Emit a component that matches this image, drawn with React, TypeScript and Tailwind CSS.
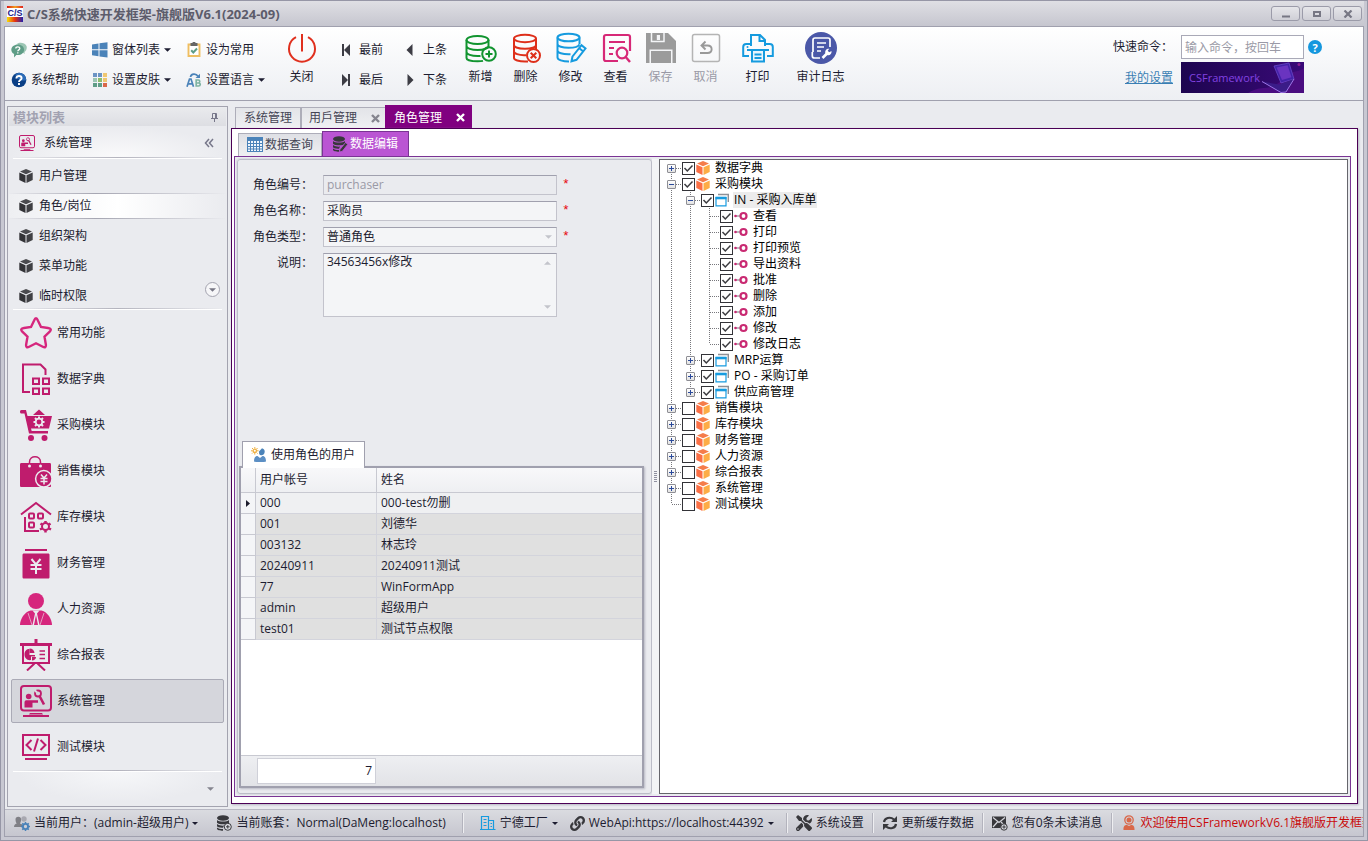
import React from 'react'
import { FaLink, FaTools } from 'react-icons/fa'

type Children = { children?: React.ReactNode }
type IconProps = { className?: string }

const PINK = '#bf1c6d'

function Caret({ className = 'h-[4px] w-[7px]' }: IconProps) {
  return (
    <svg className={className} viewBox="0 0 8 4" fill="currentColor" aria-hidden>
      <path d="M0 0h8L4 4z" />
    </svg>
  )
}

/* ---------- small toolbar icons ---------- */

const AboutIcon = () => (
  <svg className="size-4" viewBox="0 0 16 16" aria-hidden>
    <path d="M6 1.800C8-.2 14 .3 15.500 4c.8 2.600-.4 4.800-2 6l.2 2-1.700-1.200z" fill="#9cc6b4" />
    <path d="M6.800 2.500c3.600 0 6.300 2.300 6.300 5.300s-2.700 5.300-6.300 5.300c-.5 0-1 0-1.500-.1L3 15.500l.1-3.400C1.300 11.200.3 9.600.3 7.800c0-3 3-5.300 6.500-5.300z" fill="#5f9d87" />
    <path d="M4.800 6.600c0-2.300 4-2.300 4-.1 0 1.400-2 1.300-2 2.800M6.800 10.300v1.300" stroke="#fff" strokeWidth="1.300" fill="none" />
  </svg>
)
const HelpIcon = () => (
  <svg className="size-4" viewBox="0 0 16 16" aria-hidden>
    <circle cx="8" cy="8" r="7.300" fill="#0a3f86" />
    <path d="M8 .7A7.300 7.300 0 0 1 15.300 8c-4 1.500-9 0-11-5.200A7.300 7.300 0 0 1 8 .7z" fill="#2c6cb8" />
    <path d="M5.400 6.400c0-3.200 5.200-3.100 5.200-.1C10.600 8 8 8 8 9.900M8 11v1.900" stroke="#fff" strokeWidth="1.900" fill="none" />
  </svg>
)
const WindowsIcon = () => (
  <svg className="size-4" viewBox="0 0 16 16" fill="#4b83b9" aria-hidden>
    <path d="M0 2.400 6.500 1.500V7.300H0zM7.500 1.300 15.500.2V7.300h-8zM0 8.300h6.500v5.900L0 13.300zM7.500 8.300h8v7.200l-8-1.100z" />
  </svg>
)
const SkinIcon = () => {
  const c = ['#6c94c4', '#6c94c4', '#efc772', '#9cc6b4', '#8dbd6a', '#efc772', '#5f9d87', '#5f9d87', '#d9684a']
  return (
    <svg className="size-4" viewBox="0 0 16 16" aria-hidden>
      {c.map((f, i) => (
        <rect key={i} x={1 + (i % 3) * 5} y={1 + Math.floor(i / 3) * 5} width="4" height="4" fill={f} />
      ))}
    </svg>
  )
}
const ClipboardIcon = () => (
  <svg className="size-4" viewBox="0 0 16 16" aria-hidden>
    <path d="M2.500 2.500h11v11.500h-11z" fill="#fff" stroke="#efbe61" strokeWidth="1.900" />
    <path d="M4.500 1H6.500a1.500 1.500 0 0 1 3 0H11.500v3h-7z" fill="#666" />
    <path d="M5.200 8.300 7.300 10.500l3.700-4" stroke="#5f9d87" strokeWidth="2" fill="none" />
  </svg>
)
const LanguageIcon = () => (
  <svg className="size-4" viewBox="0 0 16 16" aria-hidden>
    <path d="M1 14.700 3.500 7h1.500l2.500 7.700M2.200 11.800h4" stroke="#4b83b9" strokeWidth="1.700" fill="none" />
    <path d="M10.200 8v6h2.300c2.300 0 2.300-3 .2-3h-2.500 2.200c1.800 0 1.800-3 0-3z" stroke="#7eb3a2" strokeWidth="1.700" fill="none" />
    <path d="M4.500 5C5 1.500 10 1 12 4.200" stroke="#4b83b9" strokeWidth="1.700" fill="none" />
    <path d="M14 1.800V6H9.500z" fill="#4b83b9" />
  </svg>
)
const NavIcon = ({ flip, bar }: { flip?: boolean; bar?: boolean }) => (
  <svg className={flip ? 'h-3 w-2 -scale-x-100' : 'h-3 w-2'} viewBox="0 0 8 12" fill="#3c3c44" aria-hidden>
    {bar && <rect x="0" y="0" width="2" height="12" />}
    <path d={bar ? 'M8 0v12L2 6z' : 'M6.500 0v12L.5 6z'} />
  </svg>
)

/* ---------- large toolbar icons ---------- */

const Big = ({ children }: Children) => (
  <svg className="size-8" viewBox="0 0 32 32" fill="none" strokeWidth="2" aria-hidden>
    {children}
  </svg>
)
const PowerIcon = () => (
  <Big>
    <path d="M10 5.200a13 13 0 1 0 12 0" stroke="#e0301e" />
    <path d="M16 2v17.500" stroke="#e0301e" />
  </Big>
)
const AddIcon = () => (
  <Big>
    <g stroke="#11942f">
      <ellipse cx="12.500" cy="8" rx="11" ry="4" />
      <path d="M1.500 8v18c0 2 5 3.300 11 3.300 2 0 4 0 5.500-.4M23.500 8v8M1.500 14c0 2.200 5 4 11 4s10.500-1.600 11-3.700M1.500 20c0 2.200 5 4 11 4 1 0 2 0 3-.1" />
      <circle cx="24" cy="22" r="6.800" />
      <path d="M24 18.500v7M20.500 22h7" />
    </g>
  </Big>
)
const DeleteIcon = () => (
  <Big>
    <g stroke="#de2f1a">
      <ellipse cx="15" cy="6.500" rx="11" ry="3.700" />
      <path d="M4 6.500V26c0 2 5 3.500 11 3.500h3M26 6.500V18M4 13c0 2.200 5 3.700 11 3.700s11-1.500 11-3.700M4 19.500c0 2.200 5 3.700 10 3.700h2" />
      <circle cx="23.500" cy="23.500" r="6.500" />
      <path d="m20.700 20.700 5.600 5.600M26.300 20.700l-5.600 5.600" />
    </g>
  </Big>
)
const EditIcon = () => (
  <Big>
    <g stroke="#169bdf">
      <ellipse cx="13.500" cy="5.500" rx="11" ry="3.800" />
      <path d="M2.500 5.500V25.500c0 2.200 5 4 11.500 4M24.500 5.500V12M2.500 12c0 2.200 5 3.800 11 3.800 5 0 10-1 11-3.500M2.500 18.500c0 2.200 5 3.800 11 3.800h2" />
      <path d="m17.500 24.500 9-11.300 4 3.300L21.500 27.800l-5 1.500zM24 16l4 3.300" />
    </g>
  </Big>
)
const ViewIcon = () => (
  <Big>
    <g stroke="#d72877">
      <path d="M30 19V5c0-1.300-.6-2-2-2H6c-1.400 0-2 .7-2 2v22c0 1.300.6 2 2 2h12" strokeWidth="2.200" />
      <path d="M9 10h16M9 16h5M9 22h4" />
      <circle cx="22" cy="21" r="5.300" strokeWidth="2.200" />
      <path d="m25.700 25 4.300 5" strokeWidth="2.400" />
    </g>
  </Big>
)
const SaveIcon = () => (
  <Big>
    <path d="M1 1h22l8 8v22H1z" fill="#9b9b9b" />
    <path d="M6.500 1v8.500h12.500V1" stroke="#f4f5f7" strokeWidth="1.500" />
    <path d="M11.800 3h3.200v5h-3.200z" fill="#f4f5f7" />
    <path d="M4.500 17.500h23V31h-23z" fill="#f4f5f7" />
    <path d="M6 19h20v12H6z" fill="#9b9b9b" />
  </Big>
)
const UndoIcon = () => (
  <Big>
    <rect x="2.500" y="2.500" width="27" height="27" rx="2" stroke="#b4b4b4" strokeWidth="1.500" />
    <path d="M12 13.500h5.500c5.500 0 5.500 7.500 0 7.500H10M15.500 9.500l-4 4 4 4" stroke="#999" strokeWidth="1.900" />
  </Big>
)
const PrintIcon = () => (
  <Big>
    <g stroke="#169bdf">
      <path d="M9 14V3h9l5 5v6M17.500 3v6H23" />
      <path d="M7 24H1.200V15c0-2 .8-3 3-3H9M25 24h5.800V15c0-2-.8-3-3-3H23" />
      <path d="M5 18h22" />
      <path d="M10 18h12v11.500H10z" fill="#e8f5fd" />
      <path d="M12.500 22.500h7M12.500 26h7" />
    </g>
    <circle cx="5.500" cy="15" r="1" fill="#169bdf" />
  </Big>
)
const AuditIcon = () => (
  <Big>
    <circle cx="16" cy="16" r="16" fill="#4b58a8" />
    <g stroke="#fff">
      <path d="M15 26H9.500C8 26 7.300 25 7.300 24v-4M8 20V8c0-1.300.6-2 2-2h13c1.400 0 2 .7 2 2v7" strokeWidth="1.700" />
      <path d="M12 11h9M12 15h7M12 19h4" strokeWidth="1.700" />
      <path d="m17.500 26 5-5" strokeWidth="2.600" />
    </g>
    <path d="M20.500 21.500c-1-3 1-5.300 3.800-4.800l-1.600 2.100 1.500 1.500 2.300-1.400c.5 3-1.800 4.900-4.300 4.100z" fill="#fff" />
  </Big>
)

/* ---------- navigation icons ---------- */

const Mod = ({ children, small }: Children & { small?: boolean }) => (
  <svg className={small ? 'size-4' : 'size-8'} viewBox="0 0 32 32" fill="none" stroke={PINK} strokeWidth="2" aria-hidden>
    {children}
  </svg>
)
const StarIcon = () => (
  <Mod>
    <path d="M16 1.200c.8 0 1.300.8 2 2.500l3 6.300 7 1c3 .4 3.500 1.700 1.700 3.700l-5.200 5 1.300 7.500c.5 2.900-.7 3.700-3 2.500L16 26.300l-6.800 3.400c-2.300 1.200-3.500.4-3-2.500l1.300-7.500-5.200-5C.500 12.700 1 11.400 4 11l7-1 3-6.300c.7-1.700 1.200-2.500 2-2.500z" stroke="#d6267d" strokeWidth="2.400" />
  </Mod>
)
const DictIcon = () => (
  <Mod>
    <path d="M10 29H3V1.500h17.500l5 5V12" />
    <path d="M13 15.500h6v5.500h-6zM23 15.500h6v5.500h-6zM13 25.500h6V31h-6zM23 25.500h6V31h-6z" />
  </Mod>
)
const CartIcon = () => (
  <Mod>
    <g fill={PINK} stroke="none">
      <path d="M0 2.500C0 1 1 1 2.500 1H6l1.500 6H32l-3 12.500H11l.7 2.500H28v2.500H9L4.500 4.500H1.500C.5 4.500 0 4 0 2.500zM13 6l6-5.500L25 6z" />
      <circle cx="11" cy="29" r="3" />
      <circle cx="24.500" cy="29" r="3" />
    </g>
    <circle cx="19" cy="13" r="3.300" stroke="#eaebef" strokeWidth="1.700" />
    <path d="M19 7.500v2M19 16.500v2M13.500 13h2M22.500 13h2M15 9l1.500 1.500M23 9l-1.500 1.500M15 17l1.500-1.500M23 17l-1.500-1.500" stroke="#eaebef" />
  </Mod>
)
const BagIcon = () => (
  <Mod>
    <path d="M1.500 8h28c1 0 1.500.5 1.500 1.500v21.500c0 .6-.5 1-1 1H1.500C.5 32 0 31.500 0 31V9.500C0 8.500.5 8 1.500 8z" fill={PINK} stroke="none" />
    <path d="M9.500 8V7c0-7 11-7 11 0v1" strokeWidth="1.500" />
    <circle cx="9.500" cy="11" r="1.500" fill="#eaebef" stroke="none" />
    <circle cx="20.500" cy="11" r="1.500" fill="#eaebef" stroke="none" />
    <circle cx="23.800" cy="23.800" r="8.200" fill={PINK} stroke="#eaebef" strokeWidth="1.500" />
    <path d="m21 19.500 3 3.500 3-3.500M24 23v6.500M20.500 23.500h7M20.500 26.500h7" stroke="#eaebef" strokeWidth="1.500" />
  </Mod>
)
const HouseIcon = () => (
  <Mod>
    <path d="M1 13.500 16 2l15 11.500M5 16v14h14" />
    <rect x="9" y="12.500" width="5" height="5" rx="1" />
    <rect x="18" y="12.500" width="5" height="5" rx="1" />
    <rect x="9" y="21.500" width="5" height="5" rx="1" />
    <circle cx="25.500" cy="25.500" r="3.500" />
    <path d="M25.500 20v1.500M25.500 29.500V31.500M20.500 22.500l1.500 1M29 27.500l2 1M30.500 22.500l-1.500 1M22 27.500l-2 1" strokeWidth="2.500" />
  </Mod>
)
const FinanceIcon = () => (
  <Mod>
    <path d="M5 3h22" />
    <path d="M4 6.500h24c1 0 1.500.5 1.500 1.500v22c0 1-.5 1.500-1.500 1.500H4c-1 0-1.500-.5-1.500-1.500V8c0-1 .5-1.500 1.500-1.500z" fill={PINK} stroke="none" />
    <path d="m11.500 12 4.500 5.500L20.500 12M16 17.500V27M10.500 18h11M10.500 22h11" stroke="#eaebef" />
  </Mod>
)
const PersonIcon = () => (
  <Mod>
    <g fill="#d6267d" stroke="none">
      <circle cx="16" cy="8" r="8" />
      <path d="M0 32c0-6 4.500-13 10.500-14.500h11C27.500 19 32 26 32 32z" />
    </g>
    <path d="m12.500 17.500 2.500 3-2.500 11.500h7L17 20.500l2.500-3z" fill="#eaebef" stroke="none" />
    <path d="m16 22-2 10h4z" fill="#d6267d" stroke="none" />
    <path d="m8 20 4 12M24 20l-4 12" stroke="#eaebef" strokeWidth=".6" />
  </Mod>
)
const ReportIcon = () => (
  <Mod>
    <path d="M0 5.500h32" strokeWidth="3" />
    <path d="M16 0v5" strokeWidth="3" />
    <path d="M3 6v18h26V6M14.500 24.500 7 31.500M17.500 24.500 25 31.500" />
    <path d="M19.500 12h5.500M19.500 15.500h5.500M19.500 19.500h5.500" strokeWidth="1.600" />
    <path d="M9.500 10v6h5.500v1.500h-4V21c-3.500.8-6.500-2-6.500-5.500S6.500 10 9.500 10z" fill={PINK} stroke="none" />
    <path d="M12 18h4c0 2-1.800 3.500-4 3.500z" fill={PINK} stroke="none" />
    <path d="M9.500 9.500c3 0 4.800 2 5 4.500h-5z" fill={PINK} stroke="none" />
  </Mod>
)
const SystemIcon = ({ small }: { small?: boolean }) => (
  <Mod small={small}>
    <rect x="1" y="1" width="30" height="24.500" rx="3" />
    <path d="M10 28h12l1 1.500H9z" fill={PINK} stroke="none" />
    <path d="M3 31h26" />
    <circle cx="8.700" cy="11.500" r="2.800" fill={PINK} stroke="none" />
    <path d="M4.500 22.500v-5c0-1.700 1-2.300 2.300-2.300H18v2.600h-5.500v4.700zM6.500 22.500V18" fill={PINK} stroke="none" />
    <path d="m19.500 11 4.500 8.500" strokeWidth="2.600" />
    <circle cx="18" cy="8.500" r="3" strokeWidth="1.800" />
    <path d="M14.500 5 17 7.500" stroke="#d9dae0" strokeWidth="2" />
  </Mod>
)
const CodeIcon = () => (
  <Mod>
    <path d="M3 4h26v20H3z" />
    <path d="M5 28h22" />
    <path d="m11.500 9-5 5 5 5M20.500 9l5 5-5 5M18 7.500l-4 13" />
  </Mod>
)

const Cube = ({ colors, className }: { colors: [string, string, string]; className: string }) => (
  <svg className={className} viewBox="0 0 14 14" aria-hidden>
    <path d="M7 0l6 2.600L7 5.300 1 2.600z" fill={colors[0]} />
    <path d="M.3 3.500 6.500 6.300V14L.3 11z" fill={colors[1]} />
    <path d="M13.700 3.500 7.500 6.300V14l6.200-3z" fill={colors[2]} />
  </svg>
)

/* ---------- status icons ---------- */

const UserGearIcon = () => (
  <svg className="size-4" viewBox="0 0 16 16" aria-hidden>
    <circle cx="10" cy="4" r="2.700" fill="#a8a8b0" />
    <path d="M1.500 4.500a2.800 2.800 0 1 1 5.600 0c0 2-.7 3-1.200 4 2 .4 3.600 1.500 3.600 3.500H0C0 10 1 9 2.700 8.500 2 7.500 1.500 6 1.500 4.500z" fill="#808086" />
    <circle cx="11.500" cy="11.500" r="2.600" fill="none" stroke="#4b83b9" strokeWidth="1.900" />
    <path d="M11.500 7v2M11.500 14v2M7 11.500h2M14 11.500h2M8.300 8.300l1.400 1.400M14.700 8.300l-1.400 1.400M8.300 14.700l1.400-1.400M14.700 14.700l-1.400-1.400" stroke="#4b83b9" strokeWidth="1.500" />
  </svg>
)
const DbIcon = ({ edit }: { edit?: boolean }) => (
  <svg className="size-4" viewBox="0 0 16 16" aria-hidden>
    <ellipse cx="7" cy="3" rx="6" ry="2.800" fill="#38383c" />
    <path d="M1 5c2 2 10 2 12 0v2.700c-2 2-10 2-12 0zM1 9c2 1.500 5 1.900 7 1.600l-1 2.200c-3 .2-6-.7-6-1.700zM1 12.500c1.500 1.200 4 1.600 6 1.500v1.700c-3 0-6-.7-6-2z" fill="#38383c" />
    {edit ? (
      <path d="m8 13.500 5.500-7 2.300 1.800-5.500 7-3 .7z" fill="#38383c" stroke="#ba55d3" strokeWidth=".8" />
    ) : (
      <g stroke="#38383c" fill="#dcdde2">
        <circle cx="11.800" cy="11.800" r="3.500" />
        <path d="M11.800 10v3.600M10 11.800h3.600" />
      </g>
    )}
  </svg>
)
const BuildingIcon = () => (
  <svg className="size-4" viewBox="0 0 16 16" fill="none" stroke="#169bdf" strokeWidth="1.200" aria-hidden>
    <path d="M1.500 14.500V1.500h7v13M8.500 5.500h5v9M0 14.500h15.500M3.500 4.500h3M3.500 7.500h3M3.500 10.500h3M10.500 8.500h1.500M10.500 11.500h1.500" />
  </svg>
)
const RefreshIcon = () => (
  <svg className="size-4" viewBox="0 0 16 16" fill="none" stroke="#38383c" strokeWidth="2.200" aria-hidden>
    <path d="M2 7C2.500 3 8 1.200 12 4.500M14 9c-.5 4-6 5.800-10 2.500" />
    <path d="M15 1v6H9zM1 15V9h6z" fill="#38383c" stroke="none" />
  </svg>
)
const MailIcon = () => (
  <svg className="size-4" viewBox="0 0 16 16" aria-hidden>
    <path d="M0 1.500h14v7.500L8 13H0z" fill="#38383c" />
    <path d="m1 2.500 6 5 6-5M1 12l4.500-5M9 7l2 2" stroke="#d6d7dd" strokeWidth="1.200" fill="none" />
    <circle cx="12" cy="12" r="3.200" fill="#d6d7dd" stroke="#38383c" />
    <path d="M12 10.300v3.400M10.300 12h3.400" stroke="#38383c" />
  </svg>
)
const AgentIcon = () => (
  <svg className="size-4" viewBox="0 0 16 16" aria-hidden>
    <circle cx="8" cy="5" r="4.200" fill="none" stroke="#d9684a" strokeWidth="1.300" />
    <circle cx="8" cy="5" r="2.500" fill="#d9684a" />
    <path d="M2.500 15c-.3-4 1.500-5 3-5.300L8 11l2.500-1.300c1.500.3 3.300 1.300 3 5.300z" fill="#d9684a" />
  </svg>
)

/* ---------- title and ribbon ---------- */

function TitleBar() {
  const box = 'flex h-[15px] w-[29px] items-center justify-center rounded-[3px] border border-[#9b9ba9] bg-gradient-to-b from-[#e6e6ea] to-[#cfcfd6] text-[#777784]'
  return (
    <header className="flex h-[25px] shrink-0 items-center bg-gradient-to-b from-[#dfdfe4] to-[#c6c6cf] pl-[3px] pr-[2px]">
      <svg className="size-4" viewBox="0 0 16 16" aria-hidden>
        <defs>
          <linearGradient id="logoTop" x1="0" x2="1">
            <stop offset="0" stopColor="#e01010" />
            <stop offset=".5" stopColor="#f0a020" />
            <stop offset="1" stopColor="#e02020" />
          </linearGradient>
          <linearGradient id="logoBottom" x1="0" x2="1">
            <stop offset="0" stopColor="#f8e000" />
            <stop offset=".5" stopColor="#e83010" />
            <stop offset="1" stopColor="#2020b0" />
          </linearGradient>
        </defs>
        <rect width="16" height="16" fill="#fff" />
        <rect width="16" height="2" fill="url(#logoTop)" />
        <rect y="11" width="16" height="5" fill="url(#logoBottom)" />
        <text x="8" y="10" textAnchor="middle" fontFamily="Liberation Sans" fontWeight="bold" fontSize="9" fill="#20208c">C/S</text>
      </svg>
      <h1 className="ml-1 flex-1 text-[13px] font-bold text-[#5c5c6b]">C/S系统快速开发框架-旗舰版V6.1(2024-09)</h1>
      <div className="flex gap-[2px]">
        <button className={box} aria-label="最小化"><svg className="h-2 w-2.5" viewBox="0 0 10 8"><path d="M1 5.500h8v2H1z" fill="currentColor" /></svg></button>
        <button className={box} aria-label="最大化"><svg className="h-2 w-2.5" viewBox="0 0 10 8"><path d="M2 2h6v4H2z" fill="none" stroke="currentColor" strokeWidth="2" /></svg></button>
        <button className={box} aria-label="关闭窗口"><svg className="h-2 w-2.5" viewBox="0 0 10 8"><path d="m1.500.5 7 7M8.500.5l-7 7" stroke="currentColor" strokeWidth="2.200" /></svg></button>
      </div>
    </header>
  )
}

function SmallButton({ icon, label, menu }: { icon: React.ReactNode; label: string; menu?: boolean }) {
  return (
    <button className="flex items-center gap-1 whitespace-nowrap">
      {icon}
      <span>{label}</span>
      {menu && <Caret />}
    </button>
  )
}
function NavButton({ icon, label }: { icon: React.ReactNode; label: string }) {
  return (
    <button className="flex items-center gap-[9px] whitespace-nowrap">
      {icon}
      <span>{label}</span>
    </button>
  )
}
function BigButton({ icon, label, wide, disabled }: { icon: React.ReactNode; label: string; wide?: boolean; disabled?: boolean }) {
  return (
    <button
      disabled={disabled}
      className={`flex shrink-0 flex-col items-center gap-[5px] whitespace-nowrap leading-4 disabled:text-[#9a9aa6] ${wide ? 'w-[81px]' : 'w-[45px]'}`}
    >
      {icon}
      <span>{label}</span>
    </button>
  )
}

function Ribbon() {
  return (
    <div className="flex h-[75px] shrink-0 items-start border-y border-[#a0a0ae] bg-gradient-to-b from-white to-[#edeff3] pl-[6px] pr-[41px] pt-[5px]">
      <div className="mt-[3px] grid shrink-0 grid-cols-[81px_94px_93px] grid-rows-[30px_30px]">
        <SmallButton icon={<AboutIcon />} label="关于程序" />
        <SmallButton icon={<WindowsIcon />} label="窗体列表" menu />
        <SmallButton icon={<ClipboardIcon />} label="设为常用" />
        <SmallButton icon={<HelpIcon />} label="系统帮助" />
        <SmallButton icon={<SkinIcon />} label="设置皮肤" menu />
        <SmallButton icon={<LanguageIcon />} label="设置语言" menu />
      </div>
      <BigButton icon={<PowerIcon />} label="关闭" />
      <div className="ml-[18px] mt-[3px] grid shrink-0 grid-cols-[64px_52px] grid-rows-[30px_30px]">
        <NavButton icon={<NavIcon bar />} label="最前" />
        <NavButton icon={<NavIcon />} label="上条" />
        <NavButton icon={<NavIcon bar flip />} label="最后" />
        <NavButton icon={<NavIcon flip />} label="下条" />
      </div>
      <BigButton icon={<AddIcon />} label="新增" />
      <BigButton icon={<DeleteIcon />} label="删除" />
      <BigButton icon={<EditIcon />} label="修改" />
      <BigButton icon={<ViewIcon />} label="查看" />
      <BigButton icon={<SaveIcon />} label="保存" disabled />
      <BigButton icon={<UndoIcon />} label="取消" disabled />
      <div className="w-[7px] shrink-0" />
      <BigButton icon={<PrintIcon />} label="打印" />
      <BigButton icon={<AuditIcon />} label="审计日志" wide />
      <div className="ml-auto grid grid-cols-[auto_123px_14px] items-center gap-x-1 gap-y-[3px] pt-[3px]">
        <label htmlFor="command" className="mr-1 text-right">快速命令：</label>
        <input id="command" placeholder="输入命令，按回车" className="h-6 w-full border border-[#a9a9b7] bg-white px-[3px] outline-none placeholder:text-[#9a9aa6]" />
        <button aria-label="帮助" className="flex size-[14px] items-center justify-center rounded-full bg-[#1497de] text-[11px] font-bold leading-none text-white">?</button>
        <a href="#settings" className="mr-1 text-right text-[#3a7fb4] underline">我的设置</a>
        <div className="relative flex h-[31px] items-center overflow-hidden bg-gradient-to-r from-[#1d0550] to-[#3a0a78] pl-2">
          <span className="text-[11px] text-[#8242e0]">CSFramework</span>
          <svg className="absolute right-0 top-0 h-[31px] w-[56px]" viewBox="0 0 56 31" aria-hidden>
            <path d="M0 31C14 22 22 30 34 18S48 12 56 6v25z" fill="#4a0d80" />
            <path d="m26 4 15-3 5 16-13 4z" fill="#4322a8" stroke="#6a48c8" strokeWidth=".8" />
            <path d="m28.500 5.500 11-2.200 4 12-9.500 2.700z" fill="#6a34c0" />
            <path d="m14 19.500 17 3 15-5.500-8 13-5 1z" fill="#3a1c88" />
            <path d="m14 19.500 19 11 5-.5 8-13" fill="none" stroke="#a880f0" strokeWidth=".9" />
            <circle cx="51" cy="2.500" r="1.500" fill="#8c2090" />
          </svg>
        </div>
      </div>
    </div>
  )
}

/* ---------- sidebar ---------- */

const pages = ['用户管理', '角色/岗位', '组织架构', '菜单功能', '临时权限']
const modules: { label: string; icon: React.ReactNode; active?: boolean }[] = [
  { label: '常用功能', icon: <StarIcon /> },
  { label: '数据字典', icon: <DictIcon /> },
  { label: '采购模块', icon: <CartIcon /> },
  { label: '销售模块', icon: <BagIcon /> },
  { label: '库存模块', icon: <HouseIcon /> },
  { label: '财务管理', icon: <FinanceIcon /> },
  { label: '人力资源', icon: <PersonIcon /> },
  { label: '综合报表', icon: <ReportIcon /> },
  { label: '系统管理', icon: <SystemIcon />, active: true },
  { label: '测试模块', icon: <CodeIcon /> },
]
const FadeLine = () => (
  <div className="mx-1 h-[2px] shrink-0 border-b border-white bg-gradient-to-r from-transparent via-[#b4b4be] to-transparent" />
)

function Sidebar() {
  return (
    <aside className="mt-px flex w-[221px] shrink-0 flex-col border border-[#a3a3af] bg-[#eaebef] p-px">
      <div className="flex h-[18px] shrink-0 items-center justify-between bg-gradient-to-b from-[#e9eaed] to-[#dddee3] pl-1 pr-2">
        <h2 className="text-[13px] font-bold text-[#a2a2b1]">模块列表</h2>
        <button aria-label="固定">
          <svg className="h-[9px] w-[7px]" viewBox="0 0 7 9" fill="none" stroke="#77778a" aria-hidden>
            <path d="M1.500 5.500v-5h4v5M4.500.5v5M0 5.500h7M3.500 6v3" />
          </svg>
        </button>
      </div>
      <button className="flex h-[31px] shrink-0 items-center bg-[radial-gradient(ellipse_at_bottom,#fafafb,#eaebef_70%)] pl-[10px] pr-[12px] pt-[3px]">
        <SystemIcon small />
        <span className="ml-[9px] flex-1 text-left">系统管理</span>
        <svg className="size-2.5" viewBox="0 0 10 10" fill="none" stroke="#77778a" strokeWidth="1.500" aria-hidden>
          <path d="M5 1 1.500 5 5 9M9 1 5.500 5 9 9" />
        </svg>
      </button>
      <FadeLine />
      <nav className="relative -mb-[3px] shrink-0 pt-[2px]" aria-label="系统管理">
        {pages.map((p) => (
          <button key={p} className="flex h-[30px] w-full items-center py-[2px]">
            <span
              className={
                p === '角色/岗位'
                  ? 'flex h-[26px] w-full items-center gap-[6px] border-y border-[#c0c0c9] bg-gradient-to-r from-[#eeeff2] via-white to-[#eaebef] pl-[10px] [border-image:linear-gradient(to_right,#eaebef,#a6a6b2_40%,#eaebef)_1]'
                  : 'flex w-full items-center gap-[6px] pl-[10px]'
              }
            >
              <Cube className="size-[14px]" colors={['#4a4a4e', '#333337', '#404044']} />
              <span>{p}</span>
            </span>
          </button>
        ))}
        <button aria-label="更多页面" className="absolute bottom-[14px] right-[6px] flex size-[15px] items-center justify-center rounded-full border border-[#a3a3af] bg-[#f6f6f8] text-[#777785]">
          <Caret />
        </button>
      </nav>
      <FadeLine />
      <nav className="flex shrink-0 flex-col px-[2px]" aria-label="模块">
        {modules.map((m) => (
          <button key={m.label} className="flex h-[46px] items-center py-px">
            <span
              className={
                m.active
                  ? 'flex h-full w-full items-center gap-[5px] rounded-[2px] border border-[#aaaab6] bg-[#d5d6dc] pl-2'
                  : 'flex h-full w-full items-center gap-[5px] pl-[9px]'
              }
            >
              {m.icon}
              <span>{m.label}</span>
            </span>
          </button>
        ))}
      </nav>
      <FadeLine />
      <div className="flex min-h-[30px] flex-1 items-center justify-end bg-[radial-gradient(ellipse_at_top,#f6f7f9,#eaebef_65%)] pr-[12px] text-[#85858f]">
        <button aria-label="更多模块"><Caret /></button>
      </div>
    </aside>
  )
}

/* ---------- document area ---------- */

const Cross = () => (
  <svg className="size-[9px]" viewBox="0 0 9 9" aria-hidden>
    <path d="m1 1 7 7M8 1 1 8" stroke="currentColor" strokeWidth="2.400" />
  </svg>
)

function DocumentTabs() {
  const idle = 'flex h-[21px] items-center border border-b-0 border-[#adadb9] bg-gradient-to-b from-[#e3e4e8] to-[#eff0f2] text-[#454555]'
  return (
    <div className="flex h-[23px] shrink-0 items-end pl-1">
      <div className={`${idle} w-[66px] justify-center`}><button>系统管理</button></div>
      <div className={`${idle} w-[84px] justify-between border-r-0 pl-[7px] pr-[5px]`}>
        <button>用戶管理</button>
        <button aria-label="关闭用戶管理" className="text-[#85858f]"><Cross /></button>
      </div>
      <div className="flex h-[23px] w-[87px] items-center justify-between bg-[#800080] pl-[9px] pr-[7px] pt-[2px] text-white">
        <button>角色管理</button>
        <button aria-label="关闭角色管理"><Cross /></button>
      </div>
    </div>
  )
}

function ViewTabs() {
  return (
    <div className="flex h-[25px] shrink-0 items-end pl-1">
      <button className="flex h-[23px] w-[84px] items-center gap-[2px] border border-b-0 border-[#adadb9] bg-gradient-to-b from-[#dfe0e5] to-[#eff0f2] pl-2 text-[#454555]">
        <svg className="size-4" viewBox="0 0 16 16" aria-hidden>
          <path d="M0 0h16v15H0z" fill="#4b83b9" />
          <path d="M1 4h2v2H1zM4 4h2v2H4zM7 4h2v2H7zM10 4h2v2h-2zM13 4h2v2h-2zM1 7h2v2H1zM4 7h2v2H4zM7 7h2v2H7zM10 7h2v2h-2zM13 7h2v2h-2zM1 10h2v1.500H1zM4 10h2v1.500H4zM7 10h2v1.500H7zM10 10h2v1.500h-2zM13 10h2v1.500h-2zM1 12.500h2V14H1zM4 12.500h2V14H4zM7 12.500h2V14H7zM10 12.500h2V14h-2zM13 12.500h2V14h-2z" fill="#f0f6fc" />
        </svg>
        <span>数据查询</span>
      </button>
      <button className="flex h-[25px] w-[87px] items-center gap-[2px] border border-b-0 border-[#7a3494] bg-[#ba55d3] pl-[9px] text-white">
        <DbIcon edit />
        <span>数据编辑</span>
      </button>
    </div>
  )
}

const fieldClass = 'block h-5 w-full border border-[#c3c3cc] border-t-[#a0a0ae] px-[3px] outline-none'
const Star = () => <span className="pl-[15px] font-['Liberation_Mono'] text-[13px] leading-5 text-red-600">*</span>

function RoleForm() {
  return (
    <form className="grid h-[281px] shrink-0 auto-rows-[20px] grid-cols-[75px_234px_26px] content-start gap-y-[6px] pt-[15px] leading-5">
      <label htmlFor="code" className="text-right">角色编号：</label>
      <div className="-mr-[10px] pl-[10px]"><input id="code" disabled defaultValue="purchaser" className={`${fieldClass} bg-[#eaebef] text-[#9a9aa6]`} /></div>
      <Star />
      <label htmlFor="name" className="text-right">角色名称：</label>
      <div className="-mr-[10px] pl-[10px]"><input id="name" defaultValue="采购员" className={`${fieldClass} bg-[#f4f5f7]`} /></div>
      <Star />
      <label htmlFor="kind" className="text-right">角色类型：</label>
      <div className="relative -mr-[10px] pl-[10px]">
        <select id="kind" className={`${fieldClass} appearance-none bg-[#f4f5f7] leading-4`}>
          <option>普通角色</option>
        </select>
        <span className="pointer-events-none absolute right-[5px] top-2 text-[#c3c4cb]"><Caret className="block h-1 w-[7px]" /></span>
      </div>
      <Star />
      <label htmlFor="note" className="text-right">说明：</label>
      <div className="relative -mr-[10px] h-16 pl-[10px]">
        <textarea id="note" defaultValue="34563456x修改" className="block h-16 w-full resize-none border border-[#c3c3cc] border-t-[#a0a0ae] bg-[#f4f5f7] px-[3px] leading-4 outline-none" />
        <span className="pointer-events-none absolute right-1.5 top-2 text-[#c3c4cb]"><Caret className="block h-1 w-[7px] rotate-180" /></span>
        <span className="pointer-events-none absolute bottom-2 right-1.5 text-[#c3c4cb]"><Caret className="block h-1 w-[7px]" /></span>
      </div>
    </form>
  )
}

const users: [string, string][] = [
  ['000', '000-test勿删'],
  ['001', '刘德华'],
  ['003132', '林志玲'],
  ['20240911', '20240911测试'],
  ['77', 'WinFormApp'],
  ['admin', '超级用户'],
  ['test01', '测试节点权限'],
]

function UserGrid() {
  return (
    <section className="flex min-h-0 flex-1 flex-col pb-[5px] pl-px pr-[7px]">
      <div className="relative z-10 flex h-[25px] shrink-0 pl-[3px]">
        <h3 className="-mb-[2px] flex w-[123px] items-center gap-1 border border-b-0 border-[#a0a0ae] bg-white pl-[8px]">
          <svg className="size-4" viewBox="0 0 16 16" aria-hidden>
            <path d="M8 4.500 11 1.200c3 .8 3.500 4 1.500 6.300-1.300 1.300-3.500 1-4.300-.5z" fill="#4b83b9" />
            <path d="M3 14.500c0-4 1.500-5.500 3.500-5.500L9 11l2.500-2c2 0 3.500 1.500 3.500 5.500-1 .8-11 .8-12 0z" fill="#5c8fc4" />
            <circle cx="3.800" cy="3.800" r="1.700" fill="none" stroke="#efb040" strokeWidth="1.300" />
            <path d="M3.800 0v1.500M3.800 6v1.600M0 3.800h1.500M6 3.800h1.600M1 1l1 1M6.600 1l-1 1M1 6.600l1-1M6.600 6.600l-1-1" stroke="#efb040" />
          </svg>
          <span>使用角色的用户</span>
        </h3>
      </div>
      <div className="flex min-h-0 flex-1 flex-col border-2 border-[#a0a0ae] bg-white shadow-[1px_1px_2px_#b8b8c4]">
        <table className="w-full table-fixed border-separate border-spacing-0 text-left">
          <colgroup>
            <col className="w-[15px]" />
            <col className="w-[121px]" />
            <col />
          </colgroup>
          <thead>
            <tr className="h-[25px] bg-gradient-to-b from-[#f8f8fa] to-[#eeeff2]">
              <th className="border-b border-r border-[#c8c9d1]" />
              <th className="border-b border-r border-[#c8c9d1] px-1 font-normal">用户帐号</th>
              <th className="border-b border-[#c8c9d1] px-1 font-normal">姓名</th>
            </tr>
          </thead>
          <tbody>
            {users.map(([id, name], i) => (
              <tr key={id} className={i === 0 ? 'h-[21px] bg-[#eff0f2]' : 'h-[21px] bg-[#e0e0e0]'}>
                <td className="border-b border-r border-[#c8c9d1] bg-[#f4f5f7] p-0">
                  {i === 0 && (
                    <svg className="mx-auto h-[7px] w-1" viewBox="0 0 4 7" aria-hidden>
                      <path d="M0 0v7l4-3.500z" fill="#1c1c2c" />
                    </svg>
                  )}
                </td>
                <td className="border-b border-r border-[#d3d4dc] px-1 py-0 leading-5">{id}</td>
                <td className="border-b border-[#d3d4dc] px-1 py-0 leading-5">{name}</td>
              </tr>
            ))}
          </tbody>
        </table>
        <div className="mt-auto flex h-[31px] shrink-0 items-center border-t border-[#c8c9d1] bg-gradient-to-b from-[#eeeff2] to-[#e2e3e7] pl-4">
          <output className="flex h-[26px] w-[119px] items-center justify-end border border-[#cfd0d8] bg-white px-[3px]">7</output>
        </div>
      </div>
    </section>
  )
}

/* ---------- permission tree ---------- */

type Node = { label: string; checked?: boolean; selected?: boolean; open?: boolean; leaf?: boolean; children?: Node[] }

const actions = ['查看', '打印', '打印预览', '导出资料', '批准', '删除', '添加', '修改', '修改日志']
const tree: Node[] = [
  { label: '数据字典', checked: true },
  {
    label: '采购模块',
    checked: true,
    open: true,
    children: [
      { label: 'IN - 采购入库单', checked: true, selected: true, open: true, children: actions.map((label) => ({ label, checked: true, leaf: true })) },
      { label: 'MRP运算', checked: true },
      { label: 'PO - 采购订单', checked: true },
      { label: '供应商管理', checked: true },
    ],
  },
  { label: '销售模块' },
  { label: '库存模块' },
  { label: '财务管理' },
  { label: '人力资源' },
  { label: '综合报表' },
  { label: '系统管理' },
  { label: '测试模块', leaf: true },
]

function NodeIcon({ level }: { level: number }) {
  if (level === 0) return <Cube className="size-[14px]" colors={['#f57c4a', '#fb6f45', '#fdac46']} />
  if (level === 1)
    return (
      <svg className="size-[14px]" viewBox="0 0 14 14" fill="none" aria-hidden>
        <path d="M3 1.500h10.300V9" stroke="#8e9096" strokeWidth="1.400" />
        <path d="M1 4.500h10v8.300H1z" stroke="#169bdf" strokeWidth="1.200" />
        <path d="M.5 5h11" stroke="#169bdf" strokeWidth="2.600" />
      </svg>
    )
  return (
    <svg className="size-[14px]" viewBox="0 0 14 14" fill="none" aria-hidden>
      <path d="M2 7h4" stroke="#b9b9bd" strokeWidth="2" />
      <circle cx="1.500" cy="7" r="1.300" fill="#c92a72" />
      <circle cx="9.500" cy="7" r="3" stroke="#c92a72" strokeWidth="2.200" />
    </svg>
  )
}

function Guide({ up, down, across, expander, open }: { up: boolean; down: boolean; across: boolean; expander?: boolean; open?: boolean }) {
  return (
    <span className="relative flex h-4 w-[19px] shrink-0 items-center justify-center">
      <svg className="absolute inset-0 h-4 w-[19px]" viewBox="0 0 19 16" stroke="#77777c" strokeDasharray="1 1" aria-hidden>
        {up && <path d="M9.500 0v8" />}
        {down && <path d="M9.500 8v8" />}
        {across && <path d="M10 8.500h9" />}
      </svg>
      {expander && (
        <button aria-label={open ? '折叠' : '展开'} className="relative size-[9px] rounded-[1px] border border-[#8e8e94] bg-gradient-to-b from-white to-[#e2e2e2]">
          <svg className="block size-[7px]" viewBox="0 0 7 7" stroke="#2b4a9b" aria-hidden>
            <path d={open ? 'M1 3.500h5' : 'M1 3.500h5M3.500 1v5'} />
          </svg>
        </button>
      )}
    </span>
  )
}

function TreeRows({ nodes, level, rails }: { nodes: Node[]; level: number; rails: boolean[] }) {
  return (
    <ul role={level ? 'group' : 'tree'}>
      {nodes.map((n, i) => {
        const last = i === nodes.length - 1
        return (
          <li key={n.label} role="treeitem" aria-expanded={n.open}>
            <div className="flex h-4 items-center whitespace-nowrap">
              {rails.map((r, k) => (
                <Guide key={k} up={r} down={r} across={false} />
              ))}
              <Guide up={level > 0 || i > 0} down={!last} across expander={!n.leaf} open={n.open} />
              <label className="flex items-center">
                <span className="relative ml-px size-[13px]">
                  <input type="checkbox" defaultChecked={n.checked} className="peer block size-[13px] appearance-none border border-[#333338] bg-white" />
                  <svg className="pointer-events-none absolute inset-0 hidden size-[13px] peer-checked:block" viewBox="0 0 13 13" fill="none" aria-hidden>
                    <path d="m2.500 6 2.800 3L10.500 3.500" stroke="#3c3c40" strokeWidth="1.500" />
                  </svg>
                </span>
                <span className="ml-px"><NodeIcon level={level} /></span>
                <span className={n.selected ? 'ml-1 bg-[#ececec] px-px leading-4' : 'ml-1 px-px leading-4'}>{n.label}</span>
              </label>
            </div>
            {n.open && n.children && <TreeRows nodes={n.children} level={level + 1} rails={[...rails, !last]} />}
          </li>
        )
      })}
    </ul>
  )
}

function Workspace() {
  return (
    <main className="flex min-w-0 flex-1 flex-col pb-[3px]">
      <DocumentTabs />
      <div className="flex min-h-0 flex-1 flex-col border border-[#4b0055] bg-white pb-[6px] pl-[2px] pr-[6px] pt-[2px] shadow-[1px_1px_2px_#b8b8c4]">
        <ViewTabs />
        <div className="flex min-h-0 flex-1 border border-[#7a3494] bg-[#eaebef] p-[2px]">
          <div className="flex w-[415px] shrink-0 flex-col rounded-[3px] border border-[#bcbdc8] shadow-[0_0_0_1px_#dcdde3]">
            <RoleForm />
            <UserGrid />
          </div>
          <div className="flex w-[7px] shrink-0 items-center justify-center bg-[#f3f4f6]">
            <svg className="h-3 w-[3px]" viewBox="0 0 3 12" stroke="#8f90a0" aria-hidden>
              <path d="M0 .5h3M0 2.500h3M0 4.500h3M0 6.500h3M0 8.500h3M0 10.500h3" />
            </svg>
          </div>
          <div className="min-w-0 flex-1 overflow-hidden border border-[#66666c] bg-white pl-[2px] text-black">
            <TreeRows nodes={tree} level={0} rails={[]} />
          </div>
        </div>
      </div>
    </main>
  )
}

/* ---------- status bar ---------- */

function StatusItem({ icon, label, menu, className = '' }: { icon: React.ReactNode; label: string; menu?: boolean; className?: string }) {
  return (
    <button className={`flex shrink-0 items-center gap-1 whitespace-nowrap ${className}`}>
      {icon}
      <span>{label}</span>
      {menu && <Caret className="h-[3px] w-[6px]" />}
    </button>
  )
}
const Divider = ({ className = 'mx-2' }: IconProps) => (
  <span className={`h-5 w-[2px] shrink-0 border-r border-[#eeeef1] bg-[#b3b3bd] ${className}`} />
)

function StatusBar() {
  return (
    <footer className="flex h-[27px] shrink-0 items-center overflow-hidden border-t border-[#b9b9c4] bg-gradient-to-b from-[#dadbe0] to-[#c6c6cf] pl-[9px]">
      <StatusItem icon={<UserGearIcon />} label="当前用户：(admin-超级用户)" menu />
      <StatusItem className="ml-[18px]" icon={<DbIcon />} label="当前账套：Normal(DaMeng:localhost)" />
      <Divider className="mx-4" />
      <StatusItem icon={<BuildingIcon />} label="宁德工厂" menu />
      <StatusItem className="ml-3" icon={<FaLink className="size-[15px] text-[#38383c]" />} label="WebApi:https://localhost:44392" menu />
      <Divider className="ml-3 mr-2" />
      <StatusItem icon={<FaTools className="size-4 text-[#38383c]" />} label="系统设置" />
      <Divider />
      <StatusItem icon={<RefreshIcon />} label="更新缓存数据" />
      <Divider />
      <StatusItem icon={<MailIcon />} label="您有0条未读消息" />
      <Divider />
      <StatusItem className="text-[#c80a0a]" icon={<AgentIcon />} label="欢迎使用CSFrameworkV6.1旗舰版开发框架" />
    </footer>
  )
}

export default function App() {
  return (
    <div className="flex h-screen min-h-[780px] flex-col overflow-hidden border border-[#9696a6] bg-[#c8c8d2] px-[3px] pb-[3px] font-['Open_Sans','Noto_Sans_CJK_SC',sans-serif] text-[12px] leading-4 text-[#1c1c30]">
      <TitleBar />
      <div className="flex min-h-0 flex-1 flex-col border-x border-b border-[#a0a0ae] bg-[#eaebef]">
        <Ribbon />
        <div className="flex min-h-0 flex-1 gap-[3px] pb-[2px] pl-[2px] pr-[5px] pt-1">
          <Sidebar />
          <Workspace />
        </div>
        <StatusBar />
      </div>
    </div>
  )
}
